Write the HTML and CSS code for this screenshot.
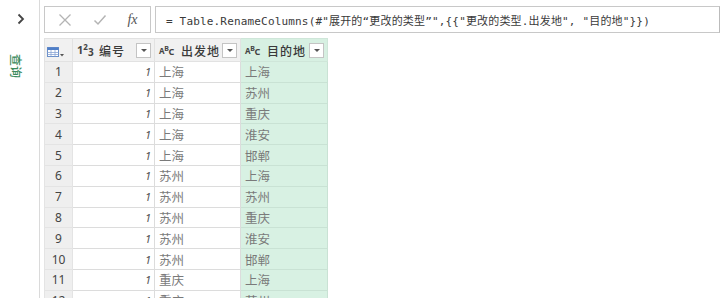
FILE: index.html
```html
<!DOCTYPE html>
<html lang="zh">
<head>
<meta charset="utf-8">
<title>Power Query</title>
<link rel="stylesheet" href="styles.css">
</head>
<body>
<div class="app">
  <aside class="pane">
    <svg class="chev" width="8" height="12" viewBox="0 0 8 12"><polyline points="1.5,1.5 6,6 1.5,10.5" fill="none" stroke="#444" stroke-width="1.8"/></svg>
    <div class="pane-title">查询</div>
  </aside>
  <main class="main">
    <div class="fbar">
      <div class="fbtns">
        <span class="fb"><svg width="14" height="14" viewBox="0 0 14 14"><path d="M1.5 1.5 L12.5 12.5 M12.5 1.5 L1.5 12.5" stroke="#b4b4b4" stroke-width="1.3" fill="none"/></svg></span>
        <span class="fb"><svg width="14" height="12" viewBox="0 0 14 12"><polyline points="1.5,6.5 5,10 12.5,1.5" stroke="#b4b4b4" stroke-width="1.5" fill="none"/></svg></span>
        <span class="fb fx">fx</span>
      </div>
      <div class="formula">= Table.RenameColumns(#"展开的“更改的类型”",{{"更改的类型.出发地", "目的地"}})</div>
    </div>
    <table class="grid">
      <colgroup><col class="c0"><col class="c1"><col class="c2"><col class="c3"></colgroup>
      <thead>
        <tr>
          <th class="corner">
            <span class="tblicon">
              <svg width="12" height="10" viewBox="0 0 12 10"><rect x="0.5" y="0.5" width="11" height="9" fill="#fff" stroke="#6a8fc8"/><rect x="0.5" y="0.5" width="11" height="2.5" fill="#4f7fc8"/><path d="M0.5 5.5H11.5M0.5 7.5H11.5M4 3V9.5M8 3V9.5" stroke="#8aa6d6" stroke-width="0.8"/></svg>
              <svg class="caret" width="4" height="3" viewBox="0 0 4 3"><polygon points="0,0 4,0 2,2.5" fill="#555"/></svg>
            </span>
          </th>
          <th><div class="hc"><span class="ty num">1<sup>2</sup><sub>3</sub></span><span class="hname">编号</span><span class="dd"></span></div></th>
          <th><div class="hc"><span class="ty abc">A<sup>B</sup><sub>C</sub></span><span class="hname">出发地</span><span class="dd"></span></div></th>
          <th class="sel"><div class="hc"><span class="ty abc">A<sup>B</sup><sub>C</sub></span><span class="hname">目的地</span><span class="dd"></span></div></th>
        </tr>
      </thead>
      <tbody>
        <tr><td class="rn">1</td><td class="n">1</td><td class="t">上海</td><td class="t sel">上海</td></tr>
        <tr><td class="rn">2</td><td class="n">1</td><td class="t">上海</td><td class="t sel">苏州</td></tr>
        <tr><td class="rn">3</td><td class="n">1</td><td class="t">上海</td><td class="t sel">重庆</td></tr>
        <tr><td class="rn">4</td><td class="n">1</td><td class="t">上海</td><td class="t sel">淮安</td></tr>
        <tr><td class="rn">5</td><td class="n">1</td><td class="t">上海</td><td class="t sel">邯郸</td></tr>
        <tr><td class="rn">6</td><td class="n">1</td><td class="t">苏州</td><td class="t sel">上海</td></tr>
        <tr><td class="rn">7</td><td class="n">1</td><td class="t">苏州</td><td class="t sel">苏州</td></tr>
        <tr><td class="rn">8</td><td class="n">1</td><td class="t">苏州</td><td class="t sel">重庆</td></tr>
        <tr><td class="rn">9</td><td class="n">1</td><td class="t">苏州</td><td class="t sel">淮安</td></tr>
        <tr><td class="rn">10</td><td class="n">1</td><td class="t">苏州</td><td class="t sel">邯郸</td></tr>
        <tr><td class="rn">11</td><td class="n">1</td><td class="t">重庆</td><td class="t sel">上海</td></tr>
        <tr><td class="rn">12</td><td class="n">1</td><td class="t">重庆</td><td class="t sel">苏州</td></tr>
      </tbody>
    </table>
  </main>
</div>
</body>
</html>
```

FILE: styles.css
```css
html, body {
  margin: 0;
  padding: 0;
  background: #fff;
  overflow: hidden;
  height: 298px;
}
body {
  font-family: "Noto Sans", "Noto Sans CJK SC", sans-serif;
  color: #333;
}
.app {
  display: flex;
  height: 298px;
}
.pane {
  width: 39px;
  flex: none;
  border-right: 1px solid #dadada;
  display: flex;
  flex-direction: column;
  align-items: center;
}
.chev {
  margin-top: 13px;
  margin-left: 2px;
}
.pane-title {
  margin-top: 29px;
  margin-right: 6px;
  writing-mode: vertical-rl;
  text-orientation: sideways;
  font-family: "Noto Sans CJK SC", sans-serif;
  font-size: 12px;
  font-weight: 500;
  color: #3b8a5c;
  line-height: 13px;
}
.main {
  flex: 1;
  padding-left: 4px;
  min-width: 0;
}
.fbar {
  display: flex;
  gap: 4px;
  margin-top: 6px;
  height: 27px;
}
.fbtns {
  width: 105px;
  flex: none;
  border: 1px solid #c8c8c8;
  display: flex;
  align-items: center;
}
.fb {
  width: 35px;
  display: flex;
  justify-content: center;
  align-items: center;
}
.fb:first-child { margin-left: 2px; }
.fx {
  font-family: "Liberation Serif", serif;
  font-style: italic;
  font-size: 14px;
  color: #555;
  margin-left: -2px;
}
.formula {
  flex: 1;
  border: 1px solid #c8c8c8;
  border-right-color: #bbb;
  padding-left: 10px;
  display: flex;
  align-items: center;
  font-family: "DejaVu Sans Mono", "Noto Sans CJK SC", monospace;
  font-size: 11px;
  letter-spacing: 0.17px;
  color: #3a3a3a;
  white-space: nowrap;
  overflow: hidden;
}
.grid {
  margin-top: 5px;
  border-collapse: collapse;
  table-layout: fixed;
  width: 283px;
}
.c0 { width: 28px; }
.c1 { width: 82px; }
.c2 { width: 86px; }
.c3 { width: 87px; }
.grid th, .grid td {
  border: 1px solid #dcdcdc;
  padding: 0;
  overflow: hidden;
  white-space: nowrap;
}
.grid thead tr { height: 20px; }
.grid tbody tr { height: 20.8px; }
.grid th {
  background: #f1f1f1;
  border-color: #e2e2e2;
  text-align: left;
}
.grid th.sel {
  background: #d7f0e2;
  border-color: #cfe6d9;
}
.corner { text-align: center; }
.tblicon {
  display: inline-flex;
  align-items: flex-end;
  gap: 1px;
  vertical-align: middle;
  margin-left: 2px;
}
.hc {
  display: flex;
  align-items: center;
  height: 19px;
  padding-left: 4px;
  padding-right: 3px;
}
.ty {
  font-family: "Noto Sans", sans-serif;
  color: #444;
  line-height: 1;
  flex: none;
}
.num {
  font-size: 11px;
  width: 18px;
}
.num sup { font-size: 8px; vertical-align: 4px; }
.num sub { font-size: 10px; vertical-align: -2px; }
.abc {
  font-size: 8px;
  width: 18px;
  letter-spacing: -0.3px;
}
.abc sup { font-size: 7px; vertical-align: 3px; }
.abc sub { font-size: 9px; vertical-align: -1px; }
.hname {
  flex: 1;
  margin-left: 4px;
  font-family: "Noto Sans CJK SC", sans-serif;
  font-size: 12px;
  font-weight: 500;
  color: #3a3a3a;
  letter-spacing: 1px;
}
.dd {
  flex: none;
  width: 13px;
  height: 13px;
  border: 1px solid #c4c4c4;
  background: #fff;
  position: relative;
}
.dd::after {
  content: "";
  position: absolute;
  left: 3.5px;
  top: 5px;
  border-left: 3px solid transparent;
  border-right: 3px solid transparent;
  border-top: 3px solid #555;
}
.rn {
  background: #efefef;
  border-color: #e4e4e4 !important;
  text-align: center;
  font-size: 12px;
  color: #444;
}
.n {
  text-align: right;
  padding-right: 3px !important;
  font-family: "Noto Sans", sans-serif;
  font-style: italic;
  font-size: 11px;
  color: #555;
}
.t {
  padding-left: 4px !important;
  font-family: "Noto Sans CJK SC", sans-serif;
  font-size: 12.5px;
  color: #7a7a7a;
}
.t.sel {
  background: #d8f1e3;
  border-color: #c9e2d4;
}
```
